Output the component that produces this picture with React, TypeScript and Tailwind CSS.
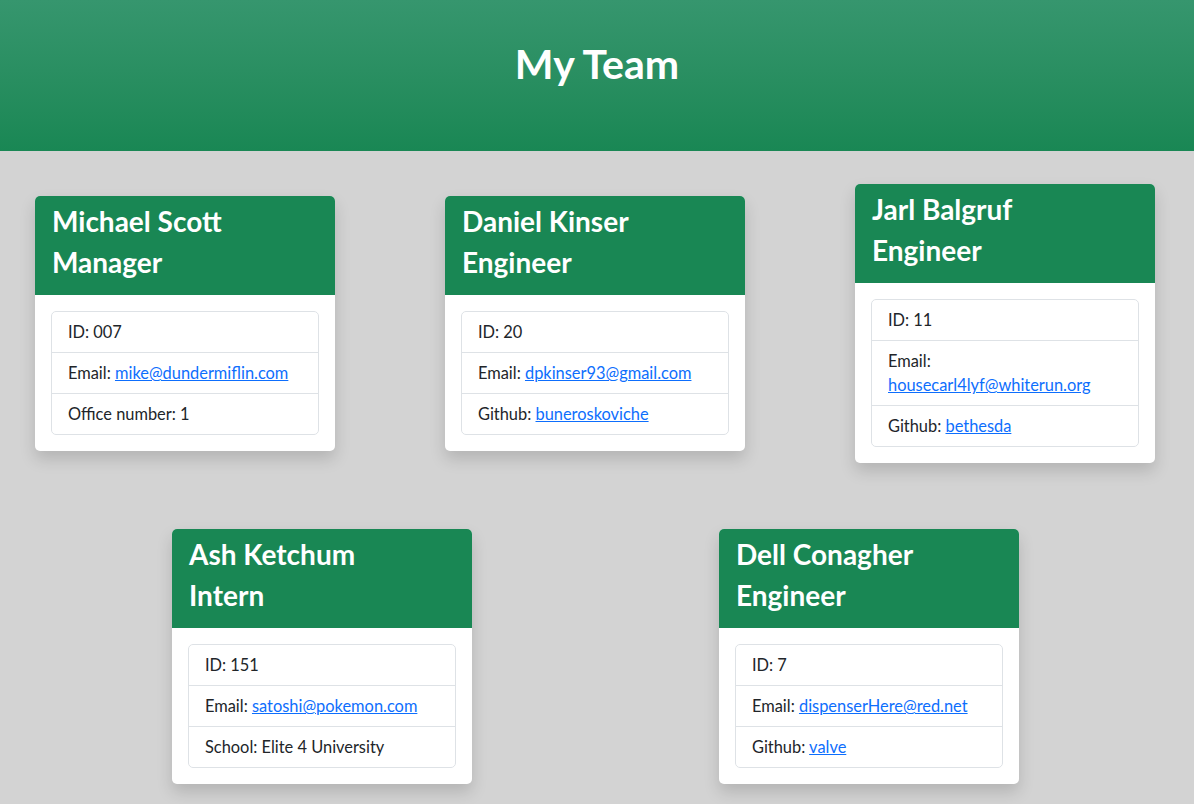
import React from "react";

type Member = {
  name: string;
  role: string;
  id: string;
  email: string;
  extraLabel: string;
  extraValue: string;
  extraLink?: boolean;
};

const rowOne: Member[] = [
  { name: "Michael Scott", role: "Manager", id: "007", email: "mike@dundermiflin.com", extraLabel: "Office number", extraValue: "1" },
  { name: "Daniel Kinser", role: "Engineer", id: "20", email: "dpkinser93@gmail.com", extraLabel: "Github", extraValue: "buneroskoviche", extraLink: true },
  { name: "Jarl Balgruf", role: "Engineer", id: "11", email: "housecarl4lyf@whiterun.org", extraLabel: "Github", extraValue: "bethesda", extraLink: true },
];

const rowTwo: Member[] = [
  { name: "Ash Ketchum", role: "Intern", id: "151", email: "satoshi@pokemon.com", extraLabel: "School", extraValue: "Elite 4 University" },
  { name: "Dell Conagher", role: "Engineer", id: "7", email: "dispenserHere@red.net", extraLabel: "Github", extraValue: "valve", extraLink: true },
];

const font = { fontFamily: '"Lato", "Open Sans", sans-serif' };

const Card: React.FC<{ m: Member }> = ({ m }) => (
  <div className="w-[300px] shrink-0 bg-white rounded-[5px] shadow-[0_8px_16px_rgba(0,0,0,0.15)] overflow-hidden">
    <div className="bg-[#198754] text-white px-[17px] pt-[5px] pb-[12px]">
      <h2 className="text-[28px] leading-[41px] font-bold">{m.name}</h2>
      <h2 className="text-[28px] leading-[41px] font-bold">{m.role}</h2>
    </div>
    <div className="p-4">
      <ul className="border border-[#dee2e6] rounded-[5px] text-[16.4px] leading-6 text-[#212529]">
        <li className="px-4 py-2">ID: {m.id}</li>
        <li className="px-4 py-2 border-t border-[#dee2e6]">
          Email:{" "}
          <a href="#" className="text-[#0d6efd] underline">
            {m.email}
          </a>
        </li>
        <li className="px-4 py-2 border-t border-[#dee2e6]">
          {m.extraLabel}:{" "}
          {m.extraLink ? (
            <a href="#" className="text-[#0d6efd] underline">
              {m.extraValue}
            </a>
          ) : (
            m.extraValue
          )}
        </li>
      </ul>
    </div>
  </div>
);

export default function App() {
  return (
    <div className="min-h-screen bg-[#d3d3d3] pb-10" style={font}>
      <header className="h-[151px] bg-gradient-to-b from-[#36966e] to-[#198754] flex justify-center pt-[36px]">
        <h1 className="text-white text-[41px] leading-[56px] font-bold">My Team</h1>
      </header>

      <div className="flex items-center justify-between pl-[35px] pr-[39px] pt-[33px]">
        {rowOne.map((m) => (
          <Card key={m.name} m={m} />
        ))}
      </div>

      <div className="flex items-center justify-between pl-[172px] pr-[175px] pt-[66px]">
        {rowTwo.map((m) => (
          <Card key={m.name} m={m} />
        ))}
      </div>
    </div>
  );
}
